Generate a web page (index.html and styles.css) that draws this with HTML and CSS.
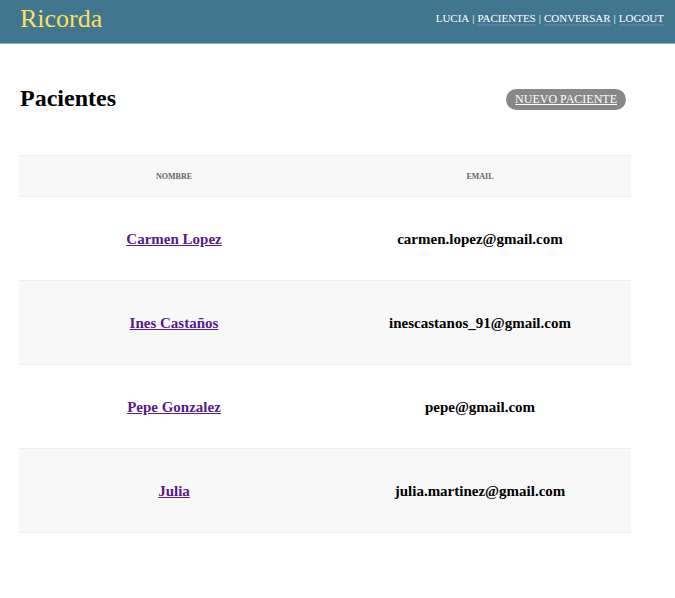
FILE: index.html
```html
<!DOCTYPE html>
<html lang="es">
<head>
<meta charset="utf-8">
<meta name="viewport" content="width=device-width, initial-scale=1">
<title>Ricorda</title>
<link rel="stylesheet" href="styles.css">
</head>
<body>
<header class="topbar">
  <div class="brand">Ricorda</div>
  <nav class="nav">
    <span>LUCIA</span>
    <span>|</span>
    <a href="#">PACIENTES</a>
    <span>|</span>
    <a href="#">CONVERSAR</a>
    <span>|</span>
    <a href="#">LOGOUT</a>
  </nav>
</header>
<main class="content">
  <div class="heading">
    <h1>Pacientes</h1>
    <a class="pill" href="#">NUEVO PACIENTE</a>
  </div>
  <table class="patients">
    <thead>
      <tr><th>NOMBRE</th><th>EMAIL</th></tr>
    </thead>
    <tbody>
      <tr><td><a href="#">Carmen Lopez</a></td><td>carmen.lopez@gmail.com</td></tr>
      <tr><td><a href="#">Ines Castaños</a></td><td>inescastanos_91@gmail.com</td></tr>
      <tr><td><a href="#">Pepe Gonzalez</a></td><td>pepe@gmail.com</td></tr>
      <tr><td><a href="#">Julia</a></td><td>julia.martinez@gmail.com</td></tr>
    </tbody>
  </table>
</main>
</body>
</html>
```
FILE: styles.css
```css
body {
  margin: 0;
  background: #fff;
  color: #000;
  font-family: "Liberation Serif", "Times New Roman", serif;
}

.topbar {
  display: flex;
  justify-content: space-between;
  align-items: flex-start;
  padding: 4px 11px 9px 20px;
  background: #41768f;
  border-bottom: 1px solid #8fb0c4;
  color: #fff;
}

.brand {
  color: #ffdf5e;
  font-size: 26px;
  line-height: 30px;
}

.nav {
  display: flex;
  gap: 3px;
  padding-top: 8px;
  font-size: 11px;
  line-height: 12px;
}

.nav a {
  color: #fff;
  text-decoration: none;
  border-bottom: 2px solid #587f9e;
}

.content {
  padding: 40px 44px 0 19px;
}

.heading {
  display: flex;
  justify-content: space-between;
  align-items: flex-end;
  padding: 0 5px 0 1px;
  margin-bottom: 42px;
}

.heading h1 {
  margin: 0;
  font-size: 24px;
  line-height: 29px;
}

.pill {
  margin-bottom: 3px;
  padding: 0 9px;
  border-radius: 11px;
  background: #888;
  color: #fff;
  font-size: 12px;
  line-height: 21px;
}

.patients {
  width: 100%;
  table-layout: fixed;
  border-collapse: collapse;
  text-align: center;
}

.patients th {
  height: 40px;
  padding: 0 0 0 4px;
  color: #666;
  font-size: 8px;
}

.patients td {
  height: 81px;
  padding: 2px 0 0 4px;
  font-size: 15px;
  font-weight: bold;
}

.patients tr {
  border-top: 1px solid #eee;
  border-bottom: 1px solid #eee;
}

.patients thead tr,
.patients tbody tr:nth-child(even) {
  background: #f8f8f8;
}

.patients a {
  color: #551a8b;
}
```
